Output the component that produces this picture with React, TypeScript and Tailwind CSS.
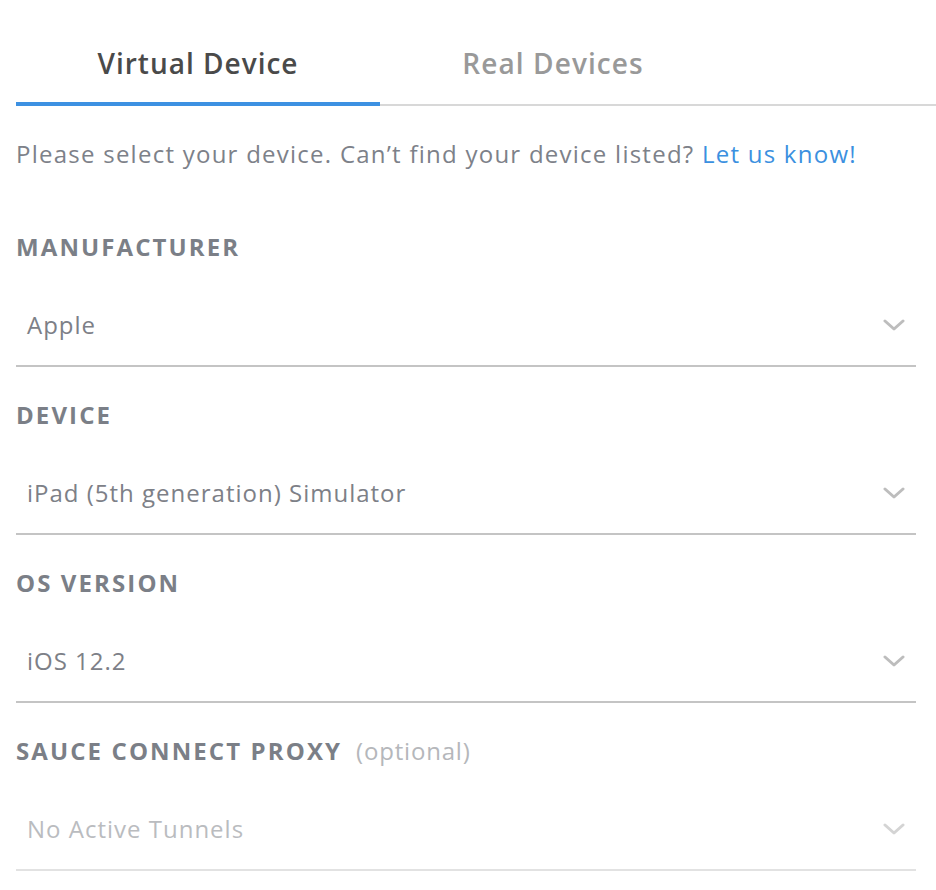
const FIELDS = [
  { label: "MANUFACTURER", value: "Apple" },
  { label: "DEVICE", value: "iPad (5th generation) Simulator" },
  { label: "OS VERSION", value: "iOS 12.2" },
];

function Chevron({ color }: { color: string }) {
  return (
    <svg width="22" height="12" viewBox="0 0 22 12" fill="none">
      <path d="M2 2l9 8 9-8" stroke={color} strokeWidth="3" strokeLinecap="round" strokeLinejoin="round" />
    </svg>
  );
}

function Field({
  label,
  value,
  optional,
  disabled,
}: {
  label: string;
  value: string;
  optional?: boolean;
  disabled?: boolean;
}) {
  return (
    <div className="flex flex-col mb-[23px]">
      <div className="h-[50px] flex items-center text-[24px] font-bold text-[#7b7f87] tracking-[2.1px]">
        {label}
        {optional && (
          <span className="ml-[14px] text-[24px] font-normal text-[#b5b7bb] tracking-[0.8px]">(optional)</span>
        )}
      </div>
      <div
        className={
          "h-[95px] flex items-center justify-between px-[11px] pt-[13px] border-b-2 " +
          (disabled ? "border-[#e2e2e2]" : "border-[#c4c4c4]")
        }
      >
        <span
          className={
            "text-[24px] leading-[30px] tracking-[1px] " + (disabled ? "text-[#babcbf]" : "text-[#7d8087]")
          }
        >
          {value}
        </span>
        <Chevron color={disabled ? "#d4d4d4" : "#bdbdbd"} />
      </div>
    </div>
  );
}

export default function App() {
  return (
    <div className="w-[936px] h-[890px] bg-white overflow-hidden" style={{ fontFamily: "'Open Sans', sans-serif" }}>
      {/* Tabs */}
      <div className="flex pl-4">
        <div className="w-[364px] h-[106px] flex justify-center border-b-4 border-[#3d91e2] pt-[46px] text-[28px] leading-[34px] font-semibold text-[#4a4a4a] tracking-[1px]">
          Virtual Device
        </div>
        <div className="flex-1 h-[106px] border-b-2 border-[#d8d8d8] flex">
          <div className="w-[346px] flex justify-center pt-[46px] text-[28px] leading-[34px] font-semibold text-[#999999] tracking-[1.1px]">
            Real Devices
          </div>
        </div>
      </div>

      <div className="pl-4 pr-5">
        <p className="mt-[33px] text-[24px] leading-[30px] text-[#7d8189] tracking-[1.25px]">
          Please select your device. Can’t find your device listed?{" "}
          <a className="text-[#3b90e0]">Let us know!</a>
        </p>

        <div className="mt-[53px] flex flex-col">
          {FIELDS.map((f) => (
            <Field key={f.label} label={f.label} value={f.value} />
          ))}
          <Field label="SAUCE CONNECT PROXY" value="No Active Tunnels" optional disabled />
        </div>
      </div>
    </div>
  );
}
